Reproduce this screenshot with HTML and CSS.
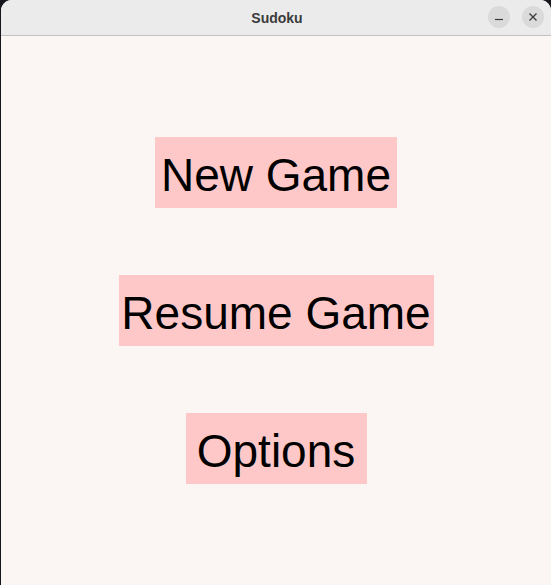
FILE: index.html
```html
<!DOCTYPE html>
<html>
<head>
<meta charset="utf-8">
<title>Sudoku</title>
<link rel="stylesheet" href="styles.css">
</head>
<body>
<div class="window">
  <header class="titlebar">
    <span class="title">Sudoku</span>
    <div class="controls">
      <span class="ctl">
        <svg width="10" height="10" viewBox="0 0 10 10"><path d="M1 7.5H9" stroke="#3a3a3a" stroke-width="1.2"/></svg>
      </span>
      <span class="ctl">
        <svg width="10" height="10" viewBox="0 0 10 10"><path d="M1.5 1.5L8.5 8.5M8.5 1.5L1.5 8.5" stroke="#3a3a3a" stroke-width="1.3"/></svg>
      </span>
    </div>
  </header>
  <main class="menu">
    <div class="menu-btn btn-new">New Game</div>
    <div class="menu-btn btn-resume">Resume Game</div>
    <div class="menu-btn btn-options">Options</div>
  </main>
</div>
</body>
</html>
```
FILE: styles.css
```css
html, body {
  margin: 0;
  padding: 0;
  background: #14161c;
  height: 585px;
  overflow: hidden;
}
.window {
  margin-left: 1px;
  height: 585px;
  border-radius: 11px 11px 0 0;
  overflow: hidden;
  background: #fbf6f3;
  display: flex;
  flex-direction: column;
}
.titlebar {
  height: 35px;
  flex: none;
  background: #ebebeb;
  border-bottom: 1px solid #c3c3c3;
  display: flex;
  align-items: center;
  justify-content: center;
  position: relative;
}
.title {
  font-family: "Liberation Sans", Arial, sans-serif;
  font-weight: bold;
  font-size: 14px;
  color: #3b3b3b;
  margin-left: 2px;
}
.controls {
  position: absolute;
  right: 7px;
  top: 6px;
  display: flex;
  gap: 12px;
}
.ctl {
  width: 22px;
  height: 22px;
  border-radius: 50%;
  background: #dadada;
  display: flex;
  align-items: center;
  justify-content: center;
}
.menu {
  flex: 1;
  display: flex;
  flex-direction: column;
  align-items: center;
  justify-content: center;
  gap: 67px;
  padding-bottom: 1px;
}
.menu-btn {
  height: 71px;
  box-sizing: border-box;
  padding-top: 6px;
  background: #ffc8c8;
  color: #000;
  font-family: "Liberation Sans", Arial, sans-serif;
  font-size: 46px;
  display: flex;
  align-items: center;
  justify-content: center;
  white-space: nowrap;
}
.btn-new { width: 242px; }
.btn-resume { width: 315px; }
.btn-options { width: 181px; }
```
